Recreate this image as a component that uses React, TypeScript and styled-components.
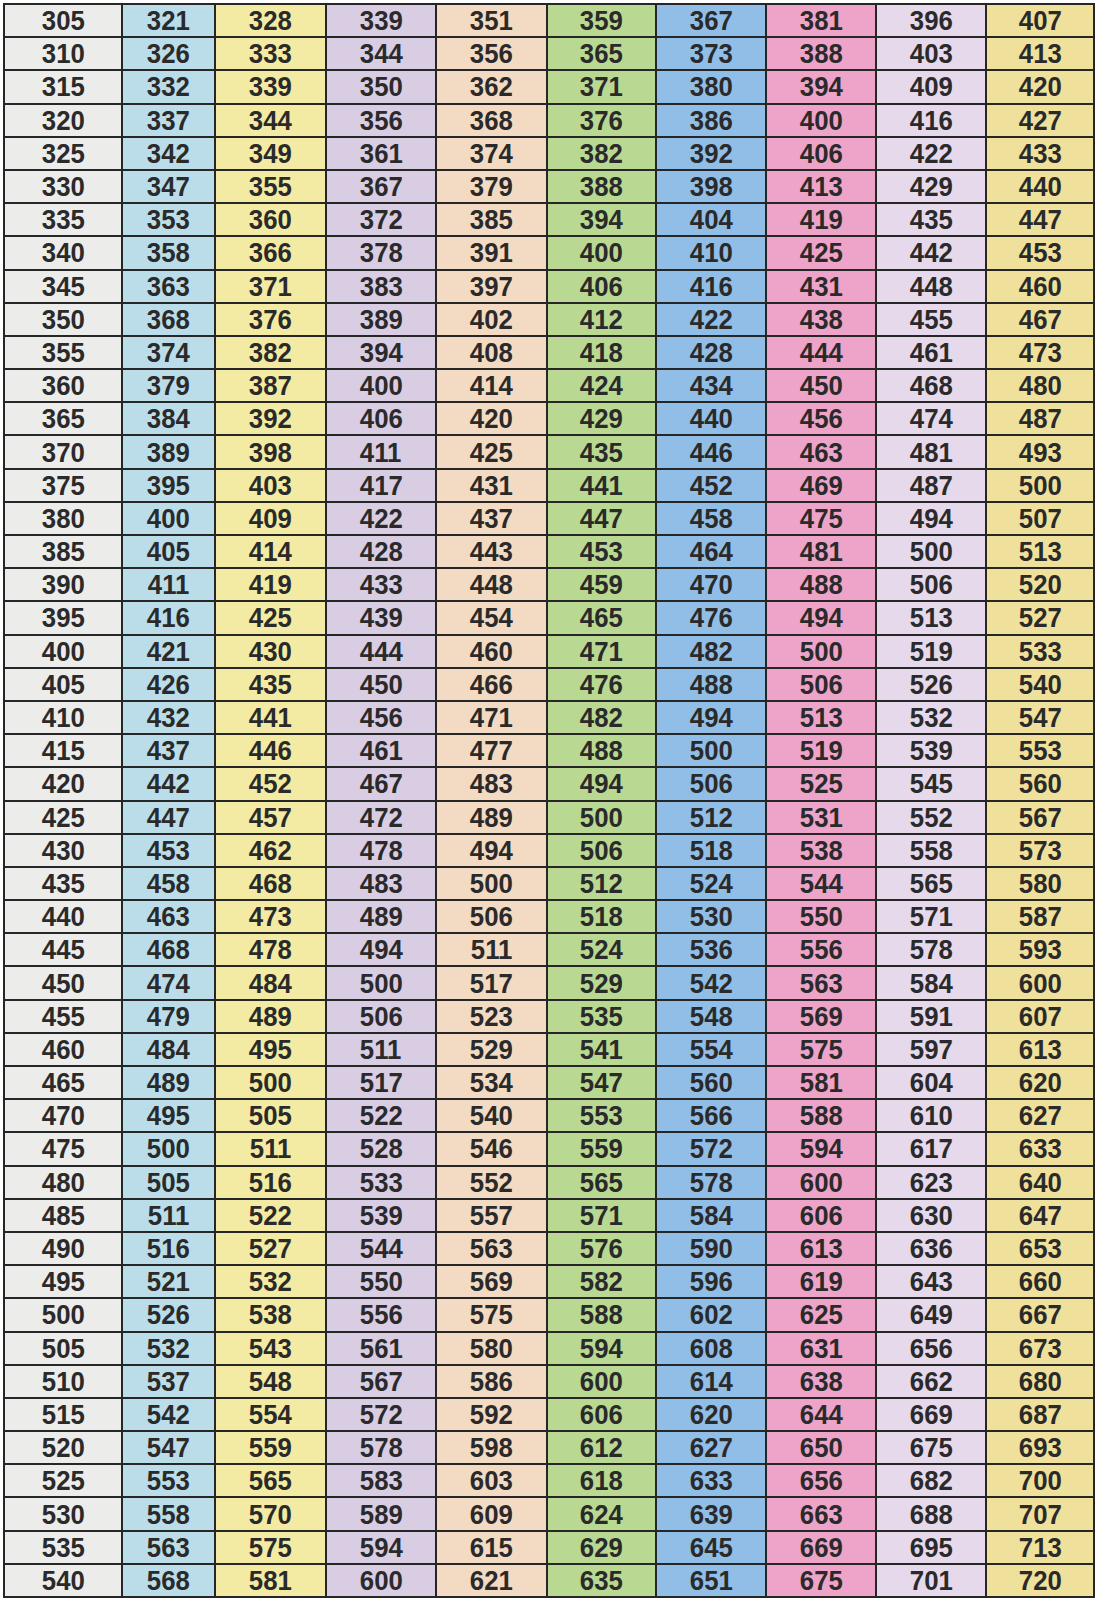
import styled, { createGlobalStyle } from "styled-components";

const GlobalStyle = createGlobalStyle`
  html, body {
    margin: 0;
    padding: 0;
    background: #ffffff;
  }
  * {
    box-sizing: border-box;
  }
`;

const columns = [
  { width: 118, color: "#ececea" },
  { width: 93, color: "#badde9" },
  { width: 111, color: "#f3eba3" },
  { width: 110, color: "#d9cde4" },
  { width: 111, color: "#f3dac2" },
  { width: 109, color: "#b9d891" },
  { width: 110, color: "#91bee6" },
  { width: 110, color: "#eda4c8" },
  { width: 110, color: "#e5d9eb" },
  { width: 108, color: "#efe09b" },
];

const raw = `305 321 328 339 351 359 367 381 396 407
310 326 333 344 356 365 373 388 403 413
315 332 339 350 362 371 380 394 409 420
320 337 344 356 368 376 386 400 416 427
325 342 349 361 374 382 392 406 422 433
330 347 355 367 379 388 398 413 429 440
335 353 360 372 385 394 404 419 435 447
340 358 366 378 391 400 410 425 442 453
345 363 371 383 397 406 416 431 448 460
350 368 376 389 402 412 422 438 455 467
355 374 382 394 408 418 428 444 461 473
360 379 387 400 414 424 434 450 468 480
365 384 392 406 420 429 440 456 474 487
370 389 398 411 425 435 446 463 481 493
375 395 403 417 431 441 452 469 487 500
380 400 409 422 437 447 458 475 494 507
385 405 414 428 443 453 464 481 500 513
390 411 419 433 448 459 470 488 506 520
395 416 425 439 454 465 476 494 513 527
400 421 430 444 460 471 482 500 519 533
405 426 435 450 466 476 488 506 526 540
410 432 441 456 471 482 494 513 532 547
415 437 446 461 477 488 500 519 539 553
420 442 452 467 483 494 506 525 545 560
425 447 457 472 489 500 512 531 552 567
430 453 462 478 494 506 518 538 558 573
435 458 468 483 500 512 524 544 565 580
440 463 473 489 506 518 530 550 571 587
445 468 478 494 511 524 536 556 578 593
450 474 484 500 517 529 542 563 584 600
455 479 489 506 523 535 548 569 591 607
460 484 495 511 529 541 554 575 597 613
465 489 500 517 534 547 560 581 604 620
470 495 505 522 540 553 566 588 610 627
475 500 511 528 546 559 572 594 617 633
480 505 516 533 552 565 578 600 623 640
485 511 522 539 557 571 584 606 630 647
490 516 527 544 563 576 590 613 636 653
495 521 532 550 569 582 596 619 643 660
500 526 538 556 575 588 602 625 649 667
505 532 543 561 580 594 608 631 656 673
510 537 548 567 586 600 614 638 662 680
515 542 554 572 592 606 620 644 669 687
520 547 559 578 598 612 627 650 675 693
525 553 565 583 603 618 633 656 682 700
530 558 570 589 609 624 639 663 688 707
535 563 575 594 615 629 645 669 695 713
540 568 581 600 621 635 651 675 701 720`;

const rows = raw.split("\n").map((line) => line.trim().split(/\s+/));

const Page = styled.div`
  padding: 3px 3px 0 3px;
  background: #ffffff;
`;

const Table = styled.div`
  display: flex;
  flex-direction: column;
  width: 1092px;
  border-top: 2px solid #262626;
  border-left: 2px solid #262626;
`;

const Row = styled.div`
  display: flex;
  height: 33.2px;
`;

const Cell = styled.div<{ $width: number; $bg: string }>`
  width: ${(p) => p.$width}px;
  flex: 0 0 auto;
  display: flex;
  align-items: center;
  justify-content: center;
  background: ${(p) => p.$bg};
  border-right: 2px solid #262626;
  border-bottom: 2px solid #262626;
`;

const Value = styled.span`
  font-family: "Liberation Sans", Arial, sans-serif;
  font-weight: 700;
  font-size: 28px;
  line-height: 1;
  color: #2a2a2a;
  display: inline-block;
  transform: scaleX(0.92);
  padding-top: 1px;
`;

const App = () => {
  return (
    <Page>
      <GlobalStyle />
      <Table>
        {rows.map((row, i) => (
          <Row key={i}>
            {row.map((val, j) => (
              <Cell key={j} $width={columns[j].width} $bg={columns[j].color}>
                <Value>{val}</Value>
              </Cell>
            ))}
          </Row>
        ))}
      </Table>
    </Page>
  );
};

export default App;
